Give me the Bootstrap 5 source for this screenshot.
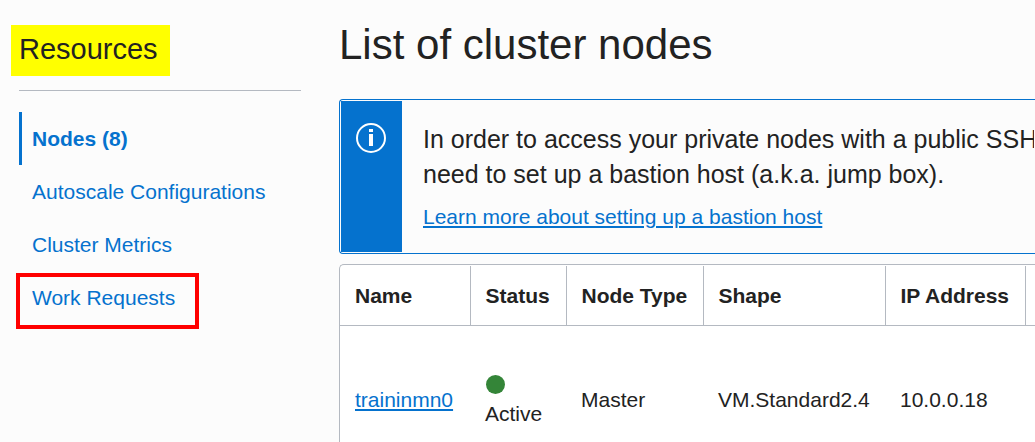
<!DOCTYPE html>
<html lang="en">
<head>
<meta charset="utf-8">
<meta name="viewport" content="width=device-width, initial-scale=1">
<title>List of cluster nodes</title>
<link href="https://cdn.jsdelivr.net/npm/bootstrap@5.3.0/dist/css/bootstrap.min.css" rel="stylesheet">
<style>
  body { font-family: "Liberation Sans", Arial, sans-serif; font-size: 21px; line-height: 29px; color: #222; background: #fcfcfc; }
  a { color: #0572ce; }
  .page-title { font-size: 42px; line-height: 50px; }
  .sidebar { flex: 0 0 301px; padding: 25px 0 0 11px; }
  .sidebar-title { font-size: 29px; line-height: 35px; background: #ff0; padding: 7px 12px 9px 8px; }
  .rule-line { border-top: 1px solid #b4b9c1; margin: 14px 0 21px 8px; }
  .resource-nav { margin-left: 8px; }
  .resource-nav .nav-link { color: #0572ce; border-left: 3px solid transparent; padding: 12px 10px; }
  .resource-nav .nav-link.active { border-color: #0572ce; font-weight: 700; }
  .flagged::after { content: ""; position: absolute; top: 2px; left: -6px; width: 183px; height: 56px; border: 4px solid red; pointer-events: none; }
  .content-area { padding: 20px 0 0 38px; }
  .notice { border: 1px solid #0572ce; border-right: 0; border-radius: 4px 0 0 4px; padding: 1px; margin: 29px 0 10px; }
  .notice-icon { flex: 0 0 61px; background: #0572ce; padding: 22px 0 0 15px; }
  .notice-body { padding: 21px 0 21px 21px; }
  .notice-body p { font-size: 25px; line-height: 35px; margin-bottom: 10px; }
  .notice-body a, .node-table a { text-decoration-thickness: 2px; text-underline-offset: 2px; }
  .table-frame { border: 1px solid #b4b9c1; border-right: 0; border-radius: 5px 0 0 0; background: #fff; padding-top: 1px; }
  .node-table { table-layout: fixed; width: 100%; }
  .node-table th, .node-table td { padding: 15px 0 15px 15px; white-space: nowrap; vertical-align: middle; }
  .node-table th { border-bottom: 1px solid #b4b9c1; border-right: 1px solid #b4b9c1; }
  .node-table th:last-child { border-right: 0; }
  .node-table td { padding-top: 44px; padding-bottom: 42px; }
  .c-name { width: 130px; } .c-status { width: 96px; } .c-type { width: 137px; } .c-shape { width: 182px; } .c-ip { width: 140px; }
  .status-dot { width: 19px; height: 19px; border-radius: 50%; background: #348538; margin: 5px 0 5px 1px; }
</style>
<script src="https://cdn.jsdelivr.net/npm/bootstrap@5.3.0/dist/js/bootstrap.bundle.min.js"></script>
</head>
<body>
<div class="d-flex vh-100 overflow-hidden">
  <aside class="sidebar">
    <h2 class="sidebar-title d-inline-block fw-normal mb-0 align-top">Resources</h2>
    <div class="rule-line"></div>
    <nav class="nav flex-column resource-nav" aria-label="Resources">
      <a class="nav-link active" aria-current="page" href="#nodes">Nodes (8)</a>
      <a class="nav-link" href="#autoscale">Autoscale Configurations</a>
      <a class="nav-link" href="#metrics">Cluster Metrics</a>
      <a class="nav-link position-relative flagged" href="#requests">Work Requests</a>
    </nav>
  </aside>
  <main class="content-area flex-grow-1 overflow-hidden" id="nodes">
    <h1 class="page-title fw-normal mb-0">List of cluster nodes</h1>
    <div class="notice d-flex" role="note">
      <div class="notice-icon lh-1">
        <svg width="30" height="30" viewBox="0 0 30 30" aria-hidden="true">
          <circle cx="15" cy="15" r="14" fill="none" stroke="#fff" stroke-width="2"/>
          <path fill="#fff" d="M13 6h4v3h-4zM13 11h4v12h-4z"/>
        </svg>
      </div>
      <div class="notice-body overflow-hidden text-nowrap">
        <p>In order to access your private nodes with a public SSH<br>need to set up a bastion host (a.k.a. jump box).</p>
        <a href="#bastion">Learn more about setting up a bastion host</a>
      </div>
    </div>
    <div class="table-frame">
      <table class="node-table">
        <colgroup><col class="c-name"><col class="c-status"><col class="c-type"><col class="c-shape"><col class="c-ip"><col></colgroup>
        <thead>
          <tr><th scope="col">Name</th><th scope="col">Status</th><th scope="col">Node Type</th><th scope="col">Shape</th><th scope="col">IP Address</th><th></th></tr>
        </thead>
        <tbody>
          <tr>
            <td><a href="#traininmn0">traininmn0</a></td>
            <td><div class="status-dot"></div>Active</td>
            <td>Master</td>
            <td>VM.Standard2.4</td>
            <td>10.0.0.18</td>
            <td></td>
          </tr>
        </tbody>
      </table>
    </div>
  </main>
</div>
</body>
</html>
